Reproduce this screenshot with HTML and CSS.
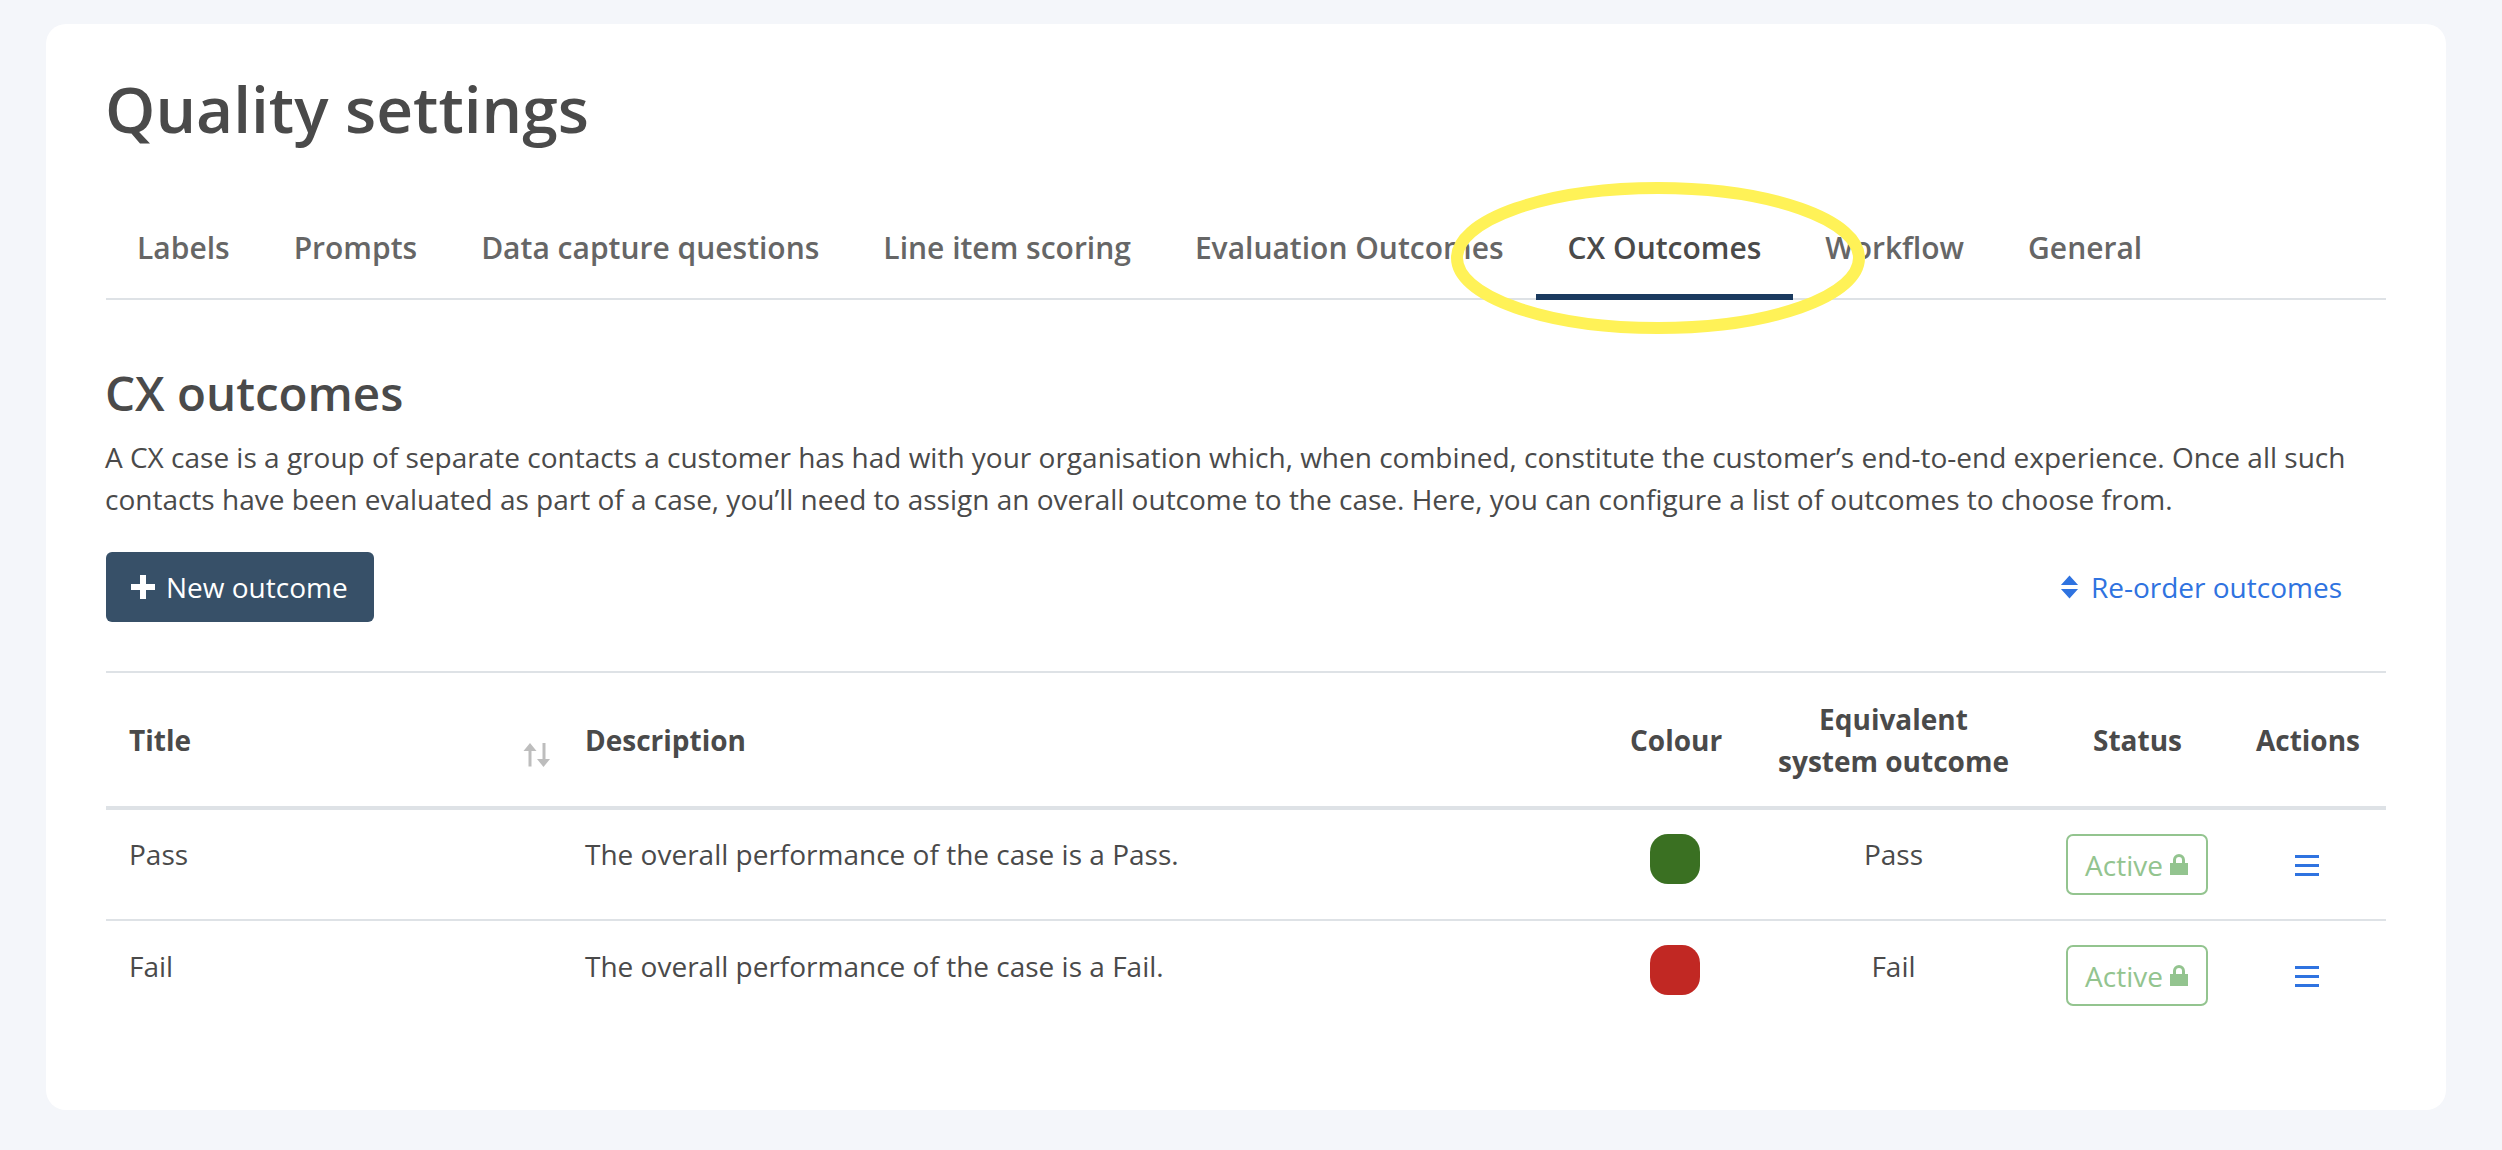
FILE: index.html
```html
<!DOCTYPE html>
<html lang="en">
<head>
<meta charset="utf-8">
<title>Quality settings</title>
<link rel="stylesheet" href="styles.css">
</head>
<body>
<main class="card">
  <h1 class="page-title">Quality settings</h1>
  <nav class="tabs">
    <a class="tab">Labels</a>
    <a class="tab">Prompts</a>
    <a class="tab">Data capture questions</a>
    <a class="tab">Line item scoring</a>
    <a class="tab">Evaluation Outcomes</a>
    <a class="tab tab-active">CX Outcomes</a>
    <a class="tab">Workflow</a>
    <a class="tab">General</a>
  </nav>
  <h2 class="section-title">CX outcomes</h2>
  <p class="intro">A CX case is a group of separate contacts a customer has had with your organisation which, when combined, constitute the customer’s end-to-end experience. Once all such contacts have been evaluated as part of a case, you’ll need to assign an overall outcome to the case. Here, you can configure a list of outcomes to choose from.</p>
  <div class="toolbar">
    <button class="btn-new"><svg class="plus" viewBox="0 0 24 24"><path d="M9 0h6v9h9v6h-9v9H9v-9H0V9h9z"/></svg>New outcome</button>
    <a class="reorder"><svg class="updown" viewBox="0 0 20 24"><path d="M10 0l9 10H1zM10 24L1 14h18z"/></svg>Re-order outcomes</a>
  </div>
  <table class="outcomes">
    <colgroup>
      <col class="c-title"><col class="c-desc"><col class="c-colour"><col class="c-equiv"><col class="c-status"><col class="c-actions">
    </colgroup>
    <thead>
      <tr>
        <th class="th-title">Title<svg class="sort" viewBox="0 0 28 24"><path d="M7 0l6.500 8H8.500v15.500h-3V8H.5zM19.500 0h3v16H27l-6.500 8L14 16h5.500z"/></svg></th>
        <th>Description</th>
        <th class="center">Colour</th>
        <th class="center">Equivalent<br>system outcome</th>
        <th class="center">Status</th>
        <th class="center">Actions</th>
      </tr>
    </thead>
    <tbody>
      <tr>
        <td>Pass</td>
        <td>The overall performance of the case is a Pass.</td>
        <td class="center top"><span class="swatch swatch-green"></span></td>
        <td class="center">Pass</td>
        <td class="center top pill-cell"><span class="pill">Active<svg class="lock" viewBox="0 0 18 21"><path fill-rule="evenodd" d="M3 9V6a6 6 0 0 1 12 0v3h3v12H0V9zm3 0h6V6a3 3 0 0 0-6 0z"/></svg></span></td>
        <td class="center top"><svg class="menu" viewBox="0 0 24 21"><path d="M0 0h24v3H0zM0 9h24v3H0zM0 18h24v3H0z"/></svg></td>
      </tr>
      <tr>
        <td>Fail</td>
        <td>The overall performance of the case is a Fail.</td>
        <td class="center top"><span class="swatch swatch-red"></span></td>
        <td class="center">Fail</td>
        <td class="center top pill-cell"><span class="pill">Active<svg class="lock" viewBox="0 0 18 21"><path fill-rule="evenodd" d="M3 9V6a6 6 0 0 1 12 0v3h3v12H0V9zm3 0h6V6a3 3 0 0 0-6 0z"/></svg></span></td>
        <td class="center top"><svg class="menu" viewBox="0 0 24 21"><path d="M0 0h24v3H0zM0 9h24v3H0zM0 18h24v3H0z"/></svg></td>
      </tr>
    </tbody>
  </table>
  <svg class="highlight" viewBox="0 0 414 152"><ellipse cx="207" cy="76" rx="201" ry="70" /></svg>
</main>
</body>
</html>
```
FILE: styles.css
```css
* { box-sizing: border-box; }
html, body { margin: 0; height: 100%; }
body {
  background: #f4f6fa;
  padding: 24px 56px 40px 46px;
  font-family: "Open Sans", sans-serif;
  color: #4a4a4a;
  font-size: 28px;
  line-height: 42px;
}
.card {
  position: relative;
  width: 2400px;
  height: 1086px;
  background: #fff;
  border-radius: 20px;
  padding: 40px 60px;
}
.page-title {
  margin: 0 0 36px -1px;
  font-size: 64px;
  line-height: 90px;
  font-weight: 600;
}
.tabs {
  display: flex;
  border-bottom: 2px solid #dee2e6;
  height: 110px;
}
.tab {
  padding: 37px 32px 0;
  font-size: 30px;
  font-weight: 600;
  color: #666;
  height: 110px;
}
.tab:first-child { padding-left: 31px; }
.tab-active {
  color: #4a4a4a;
  border-bottom: 6px solid #1a3a5f;
}
.section-title {
  margin: 63px 0 0 -1px;
  font-size: 47.5px;
  line-height: 60px;
  font-weight: 600;
}
.intro {
  margin: 13px 0 0 -1px;
  width: 2300px;
}
.toolbar {
  display: flex;
  justify-content: space-between;
  align-items: center;
  margin-top: 32px;
  height: 70px;
}
.btn-new {
  display: flex;
  align-items: center;
  gap: 11px;
  width: 268px;
  height: 70px;
  padding: 0 25px;
  border: 0;
  border-radius: 6px;
  background: #375068;
  color: #fff;
  font: 28px/42px "Open Sans", sans-serif;
}
.plus { width: 24px; height: 24px; fill: #fff; }
.reorder {
  display: flex;
  align-items: center;
  gap: 12px;
  margin-right: 44px;
  color: #2f73e0;
}
.updown { width: 19px; height: 24px; fill: #2f73e0; }
.outcomes {
  width: 100%;
  table-layout: fixed;
  border-collapse: collapse;
  margin-top: 49px;
  border-top: 2px solid #dee2e6;
}
.c-title { width: 456px; }
.c-desc { width: 1045px; }
.c-colour { width: 136px; }
.c-equiv { width: 302px; }
.c-status { width: 186px; }
.c-actions { width: 155px; }
.outcomes th {
  height: 136px;
  padding: 0 24px 0 23px;
  text-align: left;
  font-weight: 700;
  border-bottom: 4px solid #dee2e6;
}
.outcomes th.center, .outcomes td.center { text-align: center; }
.th-title { position: relative; }
.sort {
  position: absolute;
  right: 11px;
  top: 70px;
  width: 28px;
  height: 24px;
  fill: #bdbdbd;
}
.outcomes td {
  height: 112px;
  padding: 0 24px 22px 23px;
  border-bottom: 2px solid #dee2e6;
  vertical-align: middle;
}
.outcomes tbody tr:last-child td { border-bottom: 0; }
.outcomes td.top {
  padding: 24px 0 0;
  vertical-align: top;
}
.outcomes td.pill-cell { padding-right: 3px; }
.swatch {
  display: block;
  width: 50px;
  height: 50px;
  margin: 0 auto;
  border-radius: 18px;
}
.swatch-green { background: #3a7022; }
.swatch-red { background: #c12823; }
.pill {
  display: flex;
  align-items: center;
  justify-content: center;
  gap: 7px;
  width: 142px;
  height: 61px;
  margin: 0 auto;
  border: 2px solid #93c48f;
  border-radius: 7px;
  color: #93c48f;
}
.lock { width: 18px; height: 21px; fill: #93c48f; }
.menu {
  display: block;
  width: 24px;
  height: 21px;
  margin: 21px auto 0;
  position: relative;
  left: -2px;
  fill: #2f73e0;
}
.highlight {
  position: absolute;
  left: 1405px;
  top: 158px;
  width: 414px;
  height: 152px;
  fill: none;
  stroke: #fff257;
  stroke-width: 12;
}
```
